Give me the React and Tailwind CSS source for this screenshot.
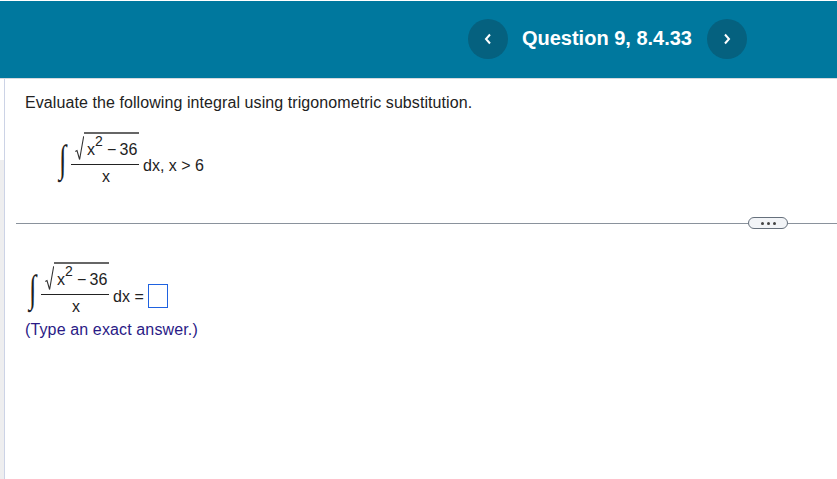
function Radical() {
  return (
    <svg width="9" height="25" viewBox="0 0 9 25" className="shrink-0 text-[#333]">
      <path d="M0.3 15.5 L2 14.5 L4.6 23.5 L8.6 0.7 L9 0.7" fill="none" stroke="currentColor" strokeWidth="1.1" />
    </svg>
  );
}

function Fraction() {
  return (
    <div className="flex w-[68px] flex-col">
      <div className="flex h-[33px] items-end border-b border-[#222] pb-[3px] pl-1">
        <Radical />
        <span className="h-[29px] flex-1 border-t-2 border-[#666] pl-[3px] pt-[5px] leading-[22px] whitespace-nowrap">
          x<sup className="top-[-9px] text-[14px] leading-none">2</sup>
          <span className="ml-1">−</span>
          <span className="ml-[3px]">36</span>
        </span>
      </div>
      <span className="h-[23px] pl-[31px] leading-[23px]">x</span>
    </div>
  );
}

function Integral() {
  return (
    <span className="mb-[10px] w-[14px] scale-y-150 self-end pl-[2px] text-[26px] leading-[36px] font-['Liberation_Serif',serif] text-[#222]">
      ∫
    </span>
  );
}

export default function App() {
  return (
    <div className="flex h-[479px] w-[837px] flex-col overflow-hidden bg-white font-['Liberation_Sans',Arial,sans-serif] text-base tracking-[0.08px] text-[#222]">
      <header className="mt-px flex h-[78px] shrink-0 items-center justify-end border-b border-[#d5d9de] bg-[#00789e] pb-[2px] pr-[90px] text-white">
        <button className="flex h-10 w-10 items-center justify-center rounded-full bg-[#05617f]">
          <svg width="8" height="12" viewBox="0 0 8 12">
            <path d="M6 1.5 L2 6 L6 10.5" fill="none" stroke="white" strokeWidth="2" />
          </svg>
        </button>
        <h1 className="mb-[2px] ml-[14px] mr-[15px] text-[20px] font-bold leading-none tracking-normal">Question 9, 8.4.33</h1>
        <button className="flex h-10 w-10 items-center justify-center rounded-full bg-[#05617f]">
          <svg width="8" height="12" viewBox="0 0 8 12">
            <path d="M2 1.5 L6 6 L2 10.5" fill="none" stroke="white" strokeWidth="2" />
          </svg>
        </button>
      </header>

      <div className="flex min-h-0 flex-1">
        <div className="flex w-[5px] shrink-0 flex-col border-r border-[#ccd3e6]">
          <div className="h-[81px] bg-white" />
          <div className="flex-1 bg-[#eeeeef]" />
        </div>

        <main className="flex-1 pt-[13px]">
          <p className="ml-5 leading-[22px]">Evaluate the following integral using trigonometric substitution.</p>

          <div className="ml-[52px] mt-[18px] flex items-end">
            <Integral />
            <Fraction />
            <span className="mb-[10px] ml-1 tracking-normal">dx, x &gt; 6</span>
          </div>

          <div className="ml-[11px] mt-[29px] flex items-center">
            <div className="h-px flex-1 bg-[#8a929c]" />
            <button className="flex h-3 w-10 items-center justify-center gap-[3px] rounded-full border-[1.5px] border-[#66707c] bg-[#f2f4f7]">
              <span className="h-[3px] w-[3px] rounded-full bg-[#444]" />
              <span className="h-[3px] w-[3px] rounded-full bg-[#444]" />
              <span className="h-[3px] w-[3px] rounded-full bg-[#444]" />
            </button>
            <div className="h-px w-[49px] bg-[#8a929c]" />
          </div>

          <div className="ml-[22px] mt-[33px] flex items-end">
            <Integral />
            <Fraction />
            <span className="mb-[9px] ml-1">dx =</span>
            <span className="mb-[10px] ml-1 h-[24px] w-5 border border-[#1f62e0]" />
          </div>
          <p className="ml-5 mt-px leading-[22px] tracking-[0.13px] text-[#2a1a86]">(Type an exact answer.)</p>
        </main>
      </div>
    </div>
  );
}
